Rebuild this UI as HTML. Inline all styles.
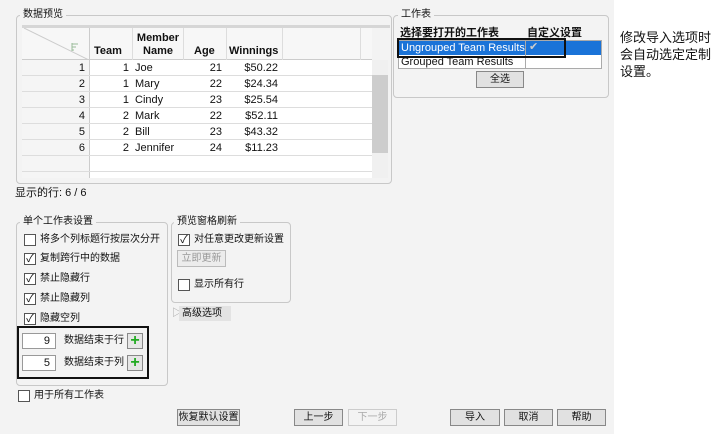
<!DOCTYPE html><html><head><meta charset="utf-8"><style>
*{box-sizing:border-box;margin:0;padding:0}
body{width:722px;height:434px;background:#fff;font-family:"Liberation Sans","Noto Sans CJK SC",sans-serif;font-size:11px;color:#111;position:relative;overflow:hidden}
.bg{position:absolute;left:0;top:0;width:614px;height:434px;background:#f3f3f3}
.a{position:absolute}
.grp{position:absolute;border:1px solid #c8c8c8;border-radius:4px}
.lbl{position:absolute;background:#f3f3f3;padding:0 3px;font-size:10px;line-height:13px}
.cb{position:absolute;width:12px;height:12px;border:1px solid #555;background:#fff;font-size:11px;line-height:10px;text-align:center}
.t{position:absolute;font-size:10px;line-height:13px;white-space:nowrap}
.n{font-size:11px}
.btn{position:absolute;height:17px;border:1px solid #888;background:#e1e1e1;font-size:10px;line-height:15px;text-align:center;white-space:nowrap}
.plus{position:absolute;width:16px;height:16px;border:1px solid #888;background:#e6e6e6;color:#2a2;font-weight:bold;font-size:16px;line-height:13px;text-align:center}
.inp{position:absolute;width:34px;height:16px;border:1px solid #999;background:#fff;text-align:right;padding-right:5px;line-height:14px}
</style></head><body>
<div class="bg"></div>
<div class="grp" style="left:16px;top:15px;width:376px;height:169px"></div>
<div class="lbl" style="left:20px;top:8px">数据预览</div>
<div class="a" style="left:22px;top:25px;width:368px;height:3px;background:#d6d6d6"></div>
<div class="a" style="left:22px;top:28px;width:350px;height:32px;background:#f7f7f7;border-bottom:1px solid #ccc"></div>
<svg class="a" style="left:22px;top:28px" width="67" height="32"><line x1="2" y1="0" x2="67" y2="32" stroke="#ccc"/><g stroke="#9b9" stroke-width="1"><line x1="50" y1="15" x2="50" y2="23"/><line x1="50" y1="16" x2="56" y2="16"/><line x1="50" y1="19" x2="54" y2="19"/><line x1="50" y1="22" x2="52" y2="22"/></g></svg>
<div class="a" style="left:89px;top:28px;width:1px;height:150px;background:#ccc"></div>
<div class="t n" style="left:94px;top:45px;font-weight:bold">Team</div>
<div class="t n" style="left:136px;top:32px;font-weight:bold;text-align:center;width:44px">Member<br>Name</div>
<div class="t n" style="left:194px;top:45px;font-weight:bold">Age</div>
<div class="t n" style="left:229px;top:45px;font-weight:bold">Winnings</div>
<div class="a" style="left:132px;top:28px;width:1px;height:150px;background:#ddd"></div>
<div class="a" style="left:183px;top:28px;width:1px;height:150px;background:#ddd"></div>
<div class="a" style="left:226px;top:28px;width:1px;height:150px;background:#ddd"></div>
<div class="a" style="left:282px;top:28px;width:1px;height:150px;background:#ddd"></div>
<div class="a" style="left:360px;top:28px;width:1px;height:150px;background:#ddd"></div>
<div class="a" style="left:22px;top:60px;width:67px;height:118px;background:#f5f5f5"></div>
<div class="a" style="left:90px;top:60px;width:282px;height:118px;background:#fff"></div>
<div class="a" style="left:372px;top:60px;width:16px;height:118px;background:#f0f0f0"></div>
<div class="a" style="left:372px;top:75px;width:16px;height:78px;background:#cdcdcd"></div>
<div id="rows"></div>
<script>
var d=[[1,1,"Joe",21,"$50.22"],[2,1,"Mary",22,"$24.34"],[3,1,"Cindy",23,"$25.54"],[4,2,"Mark",22,"$52.11"],[5,2,"Bill",23,"$43.32"],[6,2,"Jennifer",24,"$11.23"],["","","","",""]];
var h="";d.forEach(function(r,i){var y=60+i*16;
h+='<div class="a" style="left:22px;top:'+(y+15)+'px;width:350px;height:1px;background:#ddd"></div>';
h+='<div class="t n" style="left:22px;top:'+(y+2)+'px;width:63px;text-align:right">'+r[0]+'</div>';
h+='<div class="t n" style="left:90px;top:'+(y+2)+'px;width:39px;text-align:right">'+r[1]+'</div>';
h+='<div class="t n" style="left:135px;top:'+(y+2)+'px">'+r[2]+'</div>';
h+='<div class="t n" style="left:184px;top:'+(y+2)+'px;width:38px;text-align:right">'+r[3]+'</div>';
h+='<div class="t n" style="left:227px;top:'+(y+2)+'px;width:51px;text-align:right">'+r[4]+'</div>';});
document.getElementById("rows").innerHTML=h;
</script>
<div class="t" style="left:15px;top:187px;font-size:11px">显示的行: 6 / 6</div>

<div class="grp" style="left:393px;top:15px;width:216px;height:83px"></div>
<div class="lbl" style="left:398px;top:8px">工作表</div>
<div class="t" style="left:400px;top:27px;font-weight:bold;font-size:11px">选择要打开的工作表</div>
<div class="t" style="left:527px;top:27px;font-weight:bold;font-size:11px">自定义设置</div>
<div class="a" style="left:398px;top:40px;width:204px;height:29px;background:#fff;border:1px solid #aaa"></div>
<div class="a" style="left:399px;top:41px;width:202px;height:14px;background:#1a73d8"></div>
<div class="a" style="left:525px;top:40px;width:1px;height:29px;background:#aaa"></div>
<div class="t n" style="left:401px;top:42px;color:#fff">Ungrouped Team Results</div>
<div class="t n" style="left:529px;top:41px;color:#ccc">✔</div>
<div class="t n" style="left:401px;top:56px">Grouped Team Results</div>
<div class="a" style="left:397px;top:38px;width:169px;height:20px;border:2px solid #111"></div>
<div class="btn" style="left:476px;top:71px;width:48px">全选</div>
<div class="t" style="left:620px;top:29px;font-size:13px;line-height:17px">修改导入选项时<br>会自动选定定制<br>设置。</div>

<div class="grp" style="left:16px;top:222px;width:152px;height:164px"></div>
<div class="lbl" style="left:20px;top:215px">单个工作表设置</div>
<div class="cb" style="left:24px;top:234px"></div><div class="t" style="left:40px;top:233px">将多个列标题行按层次分开</div>
<div class="cb" style="left:24px;top:253px">✓</div><div class="t" style="left:40px;top:252px">复制跨行中的数据</div>
<div class="cb" style="left:24px;top:273px">✓</div><div class="t" style="left:40px;top:272px">禁止隐藏行</div>
<div class="cb" style="left:24px;top:293px">✓</div><div class="t" style="left:40px;top:292px">禁止隐藏列</div>
<div class="cb" style="left:24px;top:313px">✓</div><div class="t" style="left:40px;top:312px">隐藏空列</div>
<div class="a" style="left:17px;top:326px;width:132px;height:53px;border:2px solid #111"></div>
<div class="inp" style="left:22px;top:333px">9</div><div class="t" style="left:64px;top:334px">数据结束于行</div><div class="plus" style="left:127px;top:333px">+</div>
<div class="inp" style="left:22px;top:355px">5</div><div class="t" style="left:64px;top:356px">数据结束于列</div><div class="plus" style="left:127px;top:355px">+</div>

<div class="grp" style="left:171px;top:222px;width:120px;height:81px"></div>
<div class="lbl" style="left:174px;top:215px">预览窗格刷新</div>
<div class="cb" style="left:178px;top:234px">✓</div><div class="t" style="left:194px;top:233px">对任意更改更新设置</div>
<div class="btn" style="left:177px;top:250px;width:49px;color:#999;border-color:#bbb;background:#ececec">立即更新</div>
<div class="cb" style="left:178px;top:279px"></div><div class="t" style="left:194px;top:278px">显示所有行</div>
<div class="t" style="left:172px;top:307px;color:#999">▷</div>
<div class="a" style="left:179px;top:306px;width:52px;height:15px;background:#e3e3e3"></div>
<div class="t" style="left:182px;top:307px">高级选项</div>
<div class="cb" style="left:18px;top:390px"></div><div class="t" style="left:34px;top:389px">用于所有工作表</div>

<div class="btn" style="left:177px;top:409px;width:63px">恢复默认设置</div>
<div class="btn" style="left:294px;top:409px;width:49px">上一步</div>
<div class="btn" style="left:348px;top:409px;width:49px;color:#aaa;border-color:#ccc;background:#f3f3f3">下一步</div>
<div class="btn" style="left:450px;top:409px;width:50px">导入</div>
<div class="btn" style="left:504px;top:409px;width:49px">取消</div>
<div class="btn" style="left:557px;top:409px;width:49px">帮助</div>
</body></html>
